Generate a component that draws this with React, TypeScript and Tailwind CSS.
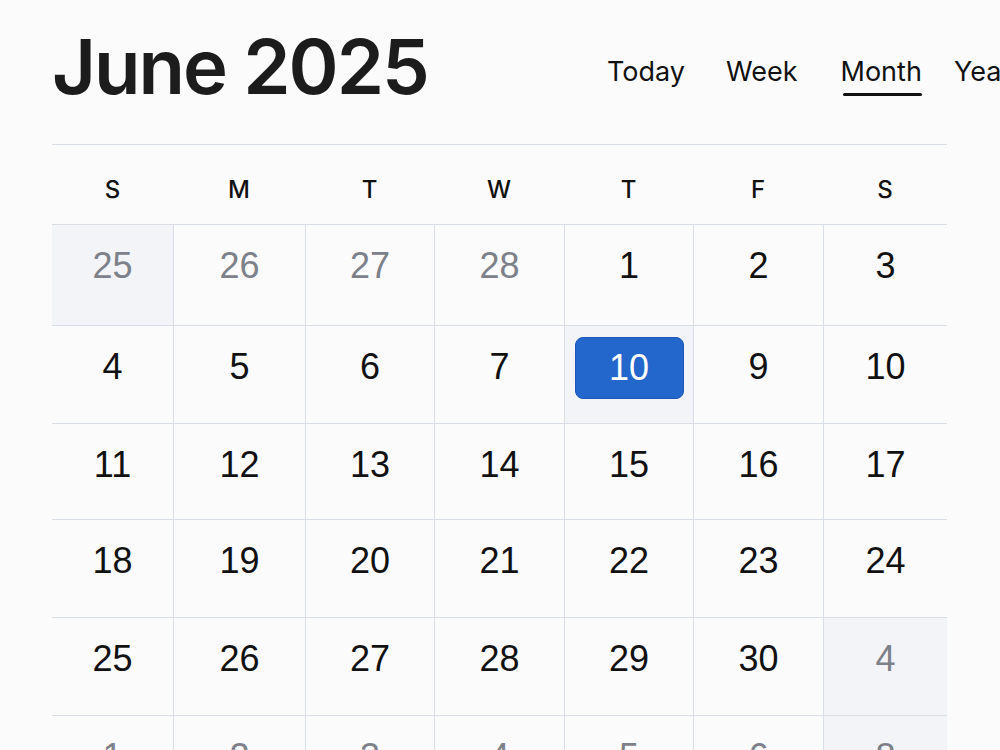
import React from 'react';

type Day = { n: number; muted?: boolean; shaded?: boolean; selected?: boolean };

const WEEKDAYS = ['S', 'M', 'T', 'W', 'T', 'F', 'S'];

// six visible weeks of the month grid
const WEEKS: Day[][] = [
  [
    { n: 25, muted: true, shaded: true },
    { n: 26, muted: true },
    { n: 27, muted: true },
    { n: 28, muted: true },
    { n: 1 },
    { n: 2 },
    { n: 3 },
  ],
  [{ n: 4 }, { n: 5 }, { n: 6 }, { n: 7 }, { n: 10, selected: true, shaded: true }, { n: 9 }, { n: 10 }],
  [{ n: 11 }, { n: 12 }, { n: 13 }, { n: 14 }, { n: 15 }, { n: 16 }, { n: 17 }],
  [{ n: 18 }, { n: 19 }, { n: 20 }, { n: 21 }, { n: 22 }, { n: 23 }, { n: 24 }],
  [{ n: 25 }, { n: 26 }, { n: 27 }, { n: 28 }, { n: 29 }, { n: 30 }, { n: 4, muted: true, shaded: true }],
  [
    { n: 1, muted: true },
    { n: 2, muted: true },
    { n: 3, muted: true },
    { n: 4, muted: true },
    { n: 5, muted: true },
    { n: 6, muted: true },
    { n: 8, muted: true, shaded: true },
  ],
];

const COLS = 'grid grid-cols-[121px_132px_129px_130px_129px_130px_124px]';
const NUM_FONT = { fontFamily: '"Liberation Sans", Arial, sans-serif' };

function NavTab({ label, active, className }: { label: string; active?: boolean; className?: string }) {
  return (
    <div className={`relative shrink-0 text-[27px] leading-none text-[#111] ${className ?? ''}`}>
      {label}
      {active && <div className="absolute left-[2px] right-0 top-[35px] h-[3px] rounded-full bg-[#111]" />}
    </div>
  );
}

function DayCell({ day, col, height }: { day: Day; col: number; height: string }) {
  return (
    <div
      className={`${height} flex justify-center ${col > 0 ? 'border-l border-[#d9dde6]' : ''} ${
        day.shaded ? 'bg-[#f3f4f8]' : ''
      }`}
      style={NUM_FONT}
    >
      {day.selected ? (
        <div className="mt-[11px] flex h-[62px] w-[109px] items-center justify-center rounded-[8px] border border-[#1d56b8] bg-[#2366cc] text-[36px] leading-none text-white">
          {day.n}
        </div>
      ) : (
        <span className={`pt-[23px] text-[36px] leading-none ${day.muted ? 'text-[#7d8189]' : 'text-[#111]'}`}>
          {day.n}
        </span>
      )}
    </div>
  );
}

export default function App() {
  // border-t on each week adds 1px, so these are one short of the drawn row pitch
  const rowHeights = ['h-[100px]', 'h-[97px]', 'h-[95px]', 'h-[97px]', 'h-[97px]', 'h-[97px]'];

  return (
    <div
      className="h-[750px] w-[1000px] overflow-hidden bg-[#fbfbfc]"
      style={{ fontFamily: 'Inter, "Liberation Sans", sans-serif' }}
    >
      <div className="w-[895px] ml-[52px]">
        {/* Header */}
        <div className="flex h-[144px] items-start">
          <h1 className="mt-[28px] w-[555px] shrink-0 text-[76px] font-semibold leading-none tracking-[-2px] text-[#1c1c1c]">
            June 2025
          </h1>
          <div className="mt-[58px] flex shrink-0 items-start">
            <NavTab label="Today" />
            <NavTab label="Week" className="ml-[41px]" />
            <NavTab label="Month" active className="ml-[43px]" />
            <NavTab label="Year" className="ml-[32px]" />
          </div>
        </div>

        {/* Weekday labels */}
        <div className={`${COLS} h-[80px] border-t border-[#d9dde6]`}>
          {WEEKDAYS.map((d, i) => (
            <div key={i} className="flex items-center justify-center pt-[10px] text-[24px] font-medium text-[#111]">
              {d}
            </div>
          ))}
        </div>

        {/* Month grid */}
        {WEEKS.map((week, r) => (
          <div key={r} className={`${COLS} border-t border-[#d9dde6]`}>
            {week.map((day, c) => (
              <DayCell key={c} day={day} col={c} height={rowHeights[r]} />
            ))}
          </div>
        ))}
      </div>
    </div>
  );
}
